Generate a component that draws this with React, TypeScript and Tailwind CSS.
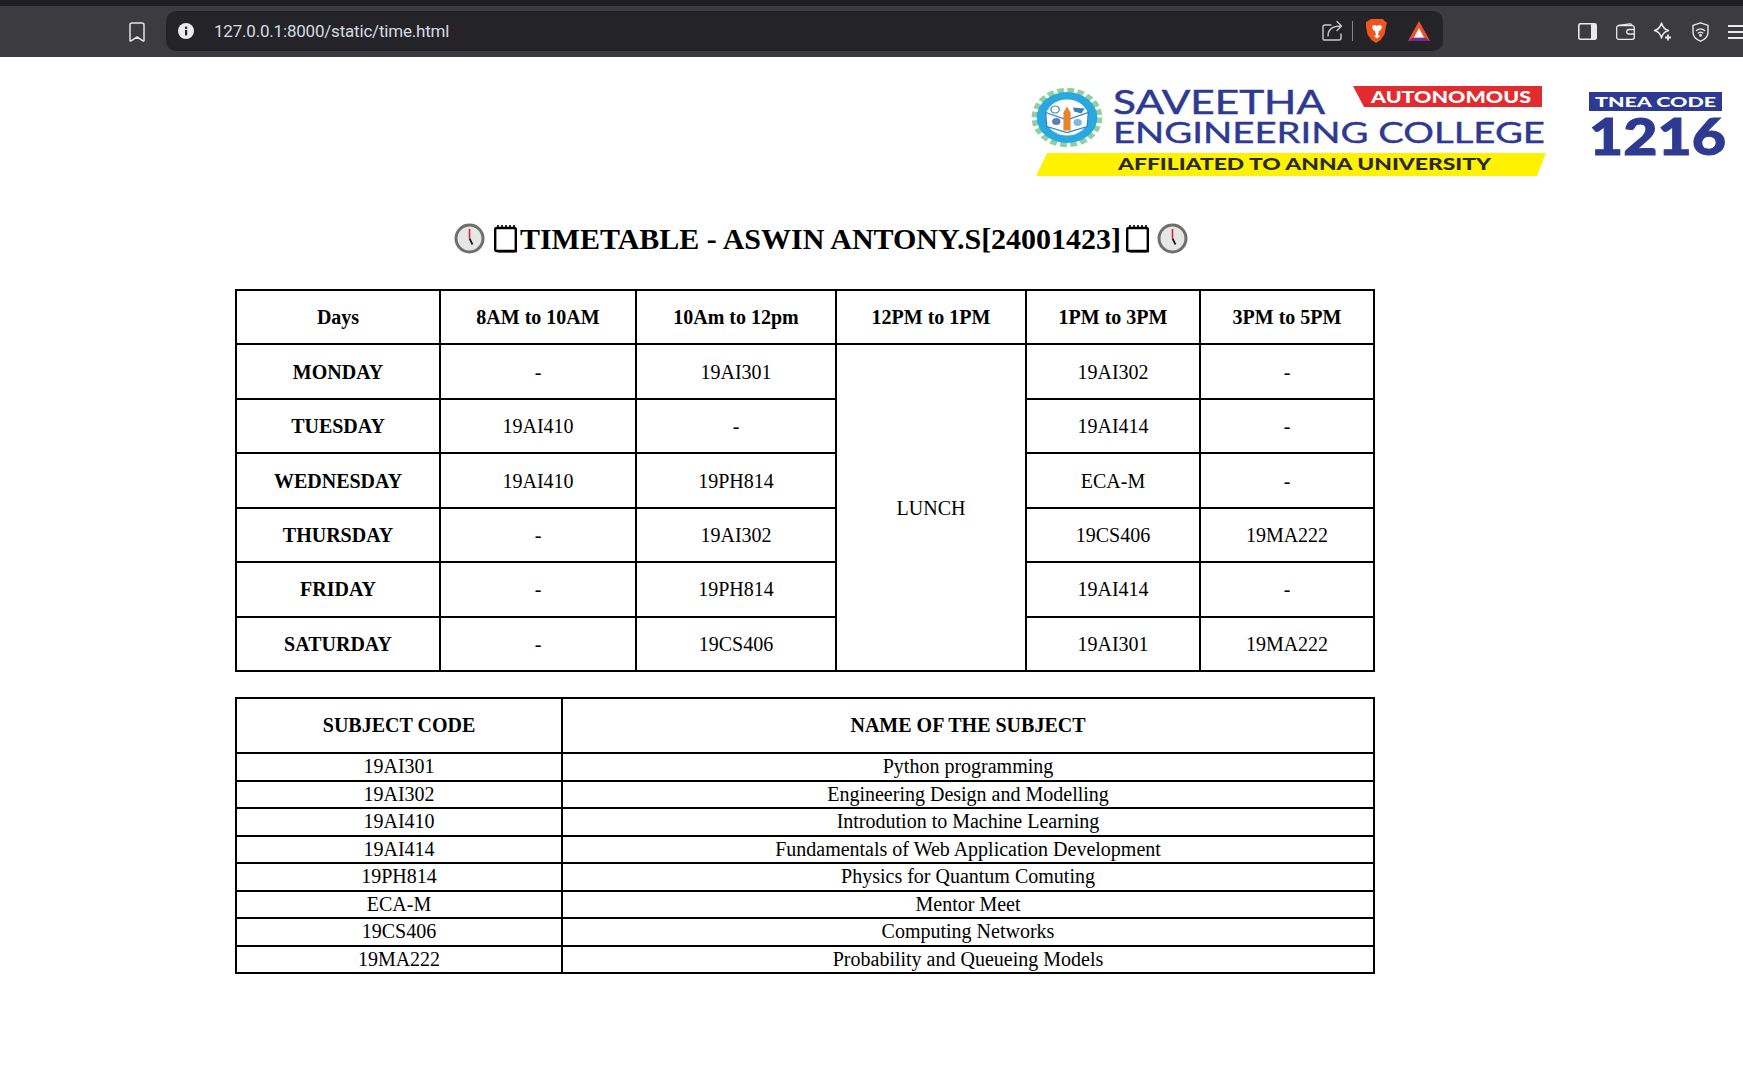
import React from 'react';

const days = [
    { day: 'MONDAY', a: '-', b: '19AI301', c: '19AI302', d: '-' },
    { day: 'TUESDAY', a: '19AI410', b: '-', c: '19AI414', d: '-' },
    { day: 'WEDNESDAY', a: '19AI410', b: '19PH814', c: 'ECA-M', d: '-' },
    { day: 'THURSDAY', a: '-', b: '19AI302', c: '19CS406', d: '19MA222' },
    { day: 'FRIDAY', a: '-', b: '19PH814', c: '19AI414', d: '-' },
    { day: 'SATURDAY', a: '-', b: '19CS406', c: '19AI301', d: '19MA222' },
];

const subjects = [
    ['19AI301', 'Python programming'],
    ['19AI302', 'Engineering Design and Modelling'],
    ['19AI410', 'Introdution to Machine Learning'],
    ['19AI414', 'Fundamentals of Web Application Development'],
    ['19PH814', 'Physics for Quantum Comuting'],
    ['ECA-M', 'Mentor Meet'],
    ['19CS406', 'Computing Networks'],
    ['19MA222', 'Probability and Queueing Models'],
];

const cell = 'border-2 border-black p-0 text-center align-middle';

const ClockEmoji = () => (
    <svg width="31" height="31" viewBox="0 0 31 31" className="shrink-0">
        <circle cx="15.5" cy="15.5" r="13.5" fill="#e6e6e6" stroke="#6e6e6e" strokeWidth="3" />
        <path d="M15.5 6v9.5" stroke="#d8204f" strokeWidth="1.6" />
        <path d="M15.5 15.5l3 6" stroke="#222" strokeWidth="1.8" />
    </svg>
);

const NotebookEmoji = () => (
    <svg width="26" height="30" viewBox="0 0 26 30" className="shrink-0">
        <rect x="2.2" y="5" width="20.6" height="23" rx="1.5" fill="#fff" stroke="#000" strokeWidth="2.4" />
        <path d="M23.5 9v20H5" fill="none" stroke="#000" strokeWidth="1" />
        <path d="M5 2v4M9 2v4M13 2v4M17 2v4M21 2v4" stroke="#000" strokeWidth="1.6" />
    </svg>
);

const BrowserBar = () => (
    <div className="h-[57px] bg-[#3b3b40] border-t-[6px] border-[#1f1e24] flex items-start text-[#e3e3e6]">
        <div className="w-[166px] h-[51px] flex items-center pl-[129px] shrink-0">
            <svg width="16" height="20" viewBox="0 0 16 20" fill="none" stroke="currentColor" strokeWidth="1.5" strokeLinejoin="round">
                <path d="M1 3a2 2 0 0 1 2-2h10a2 2 0 0 1 2 2v15.500c0 .5-.5.7-1 .4L8 15l-6 3.900c-.5.3-1 .1-1-.4z" />
            </svg>
        </div>
        <div className="w-[1277px] h-[40px] mt-[5px] bg-[#232328] rounded-[10px] flex items-center shrink-0">
            <svg width="18" height="18" viewBox="0 0 18 18" className="ml-[11px] shrink-0">
                <circle cx="9" cy="9" r="8" fill="#ececee" />
                <rect x="8" y="8" width="2.2" height="5.4" fill="#232328" />
                <rect x="8" y="4.6" width="2.2" height="2.2" fill="#232328" />
            </svg>
            <span className="ml-[19px] pt-px font-['Roboto',sans-serif] text-[17px] text-[#d6dbe2] tracking-[-0.2px]">127.0.0.1:8000/static/time.html</span>
            <div className="ml-auto flex items-center">
                <svg width="24" height="24" viewBox="0 0 24 24" fill="none" stroke="#c9c9cd" strokeWidth="1.4">
                    <path d="M11 6H5a2 2 0 0 0-2 2v12a1 1 0 0 0 1 1h15a2 2 0 0 0 2-2v-4" strokeLinecap="round" />
                    <path d="M8 17c0-6 4-10 13-10M17 2.5 21.5 7 17 11.5" strokeLinecap="round" strokeLinejoin="round" />
                </svg>
                <div className="ml-[8px] w-[1px] h-[20px] bg-[#85858a]" />
                <svg width="22" height="26" viewBox="0 0 22 26" className="ml-[13px]">
                    <path d="M5 1h12l2 2.500 2 1-1 4-1.500 8-4 5.500-4.500 3-4.500-3-4-5.500-1.500-8-1-4 2-1z" fill="#f1551f" />
                    <path d="M6 8l3-1 2 1 2-1 3 1-1 4-2 1-1 4 2 1-3 2.500L8 18l2-1-1-4-2-1z" fill="#fff" />
                </svg>
                <svg width="24" height="24" viewBox="0 0 24 24" className="ml-[19px] mr-[12px]">
                    <path d="M12 2 1 22h22z" fill="#f0502e" />
                    <path d="M1 22l4-3h14l4 3z" fill="#6d2f92" />
                    <path d="M12 9l-5 9.500h10z" fill="#fff" />
                </svg>
            </div>
        </div>
        <div className="flex items-center h-[51px] ml-[135px] shrink-0 text-[#e9e9ec]">
            <svg width="19" height="17" viewBox="0 0 19 17" fill="none">
                <rect x=".8" y=".8" width="17.400" height="15.400" rx="1.500" stroke="currentColor" strokeWidth="1.6" />
                <rect x="13" y="1" width="5" height="15" fill="currentColor" />
            </svg>
            <svg width="19" height="17" viewBox="0 0 19 17" fill="none" stroke="currentColor" strokeWidth="1.3" className="ml-[19px]">
                <path d="M2 2.500 14 .8c1.200 0 2 .7 2 2" />
                <rect x=".7" y="2.700" width="17.600" height="13.600" rx="2" />
                <path d="M18.300 6.500H13a2 2 0 0 0 0 4.500h5.300" />
            </svg>
            <svg width="19" height="19" viewBox="0 0 19 19" fill="none" stroke="currentColor" strokeWidth="1.5" className="ml-[18px]">
                <path d="M8.500 1c1 4 3 6.500 7 7.500-4 1-6 3.500-7 7.500-1-4-3-6.500-7-7.500 4-1 6-3.500 7-7.500z" strokeLinejoin="round" />
                <path d="M15 12.500v6M12 15.500h6" strokeWidth="1.800" />
            </svg>
            <svg width="17" height="20" viewBox="0 0 17 20" fill="none" stroke="currentColor" strokeWidth="1.400" className="ml-[20px]">
                <path d="M8.500 .8 16 3.300v7c0 4.500-3.500 7.400-7.500 8.900C4.500 17.700 1 14.800 1 10.300v-7z" strokeLinejoin="round" />
                <path d="M4.500 8.500c2.300-2 5.700-2 8 0M6.300 11c1.300-1 3.100-1 4.400 0" strokeLinecap="round" />
                <circle cx="8.500" cy="13.300" r=".8" fill="currentColor" />
            </svg>
            <div className="flex flex-col gap-[4px] w-[16px] ml-[19px]">
                <div className="h-[2px] bg-[#e9e9ec]" />
                <div className="h-[2px] bg-[#e9e9ec]" />
                <div className="h-[2px] bg-[#e9e9ec]" />
            </div>
        </div>
    </div>
);

const CollegeLogo = () => (
    <svg width="733" height="120" viewBox="1010 70 733 120" className="shrink-0">
        <g transform="translate(1067 117.500) scale(1.190 1)">
            <circle r="26.500" fill="none" stroke="#8fd0a0" strokeWidth="6.500" strokeDasharray="5.500 2.830" />
            <circle r="25.500" fill="#29a9e0" />
            <circle r="18" fill="#fff" />
            <path d="M-18-5-1 2 0 4 1 2 18-5 17 9 0 15-17 9z" fill="#fff" stroke="#2e86c5" strokeWidth="1.200" />
            <path d="M0-11l3 6v18h-6v-18z" fill="#e8842c" />
            <circle cx="-10" cy="-8" r="3.500" fill="none" stroke="#4a8ec9" strokeWidth="1.200" />
            <path d="M5-10l10 1-3 5-6-2z" fill="#3d7fb8" />
            <circle cx="-9" cy="4" r="3.500" fill="#5a7fb5" />
            <circle cx="9" cy="5" r="3.500" fill="#7fb9dd" />
        </g>
        <text x="1113" y="114" textLength="212" lengthAdjust="spacingAndGlyphs" fontFamily="Lato, sans-serif" fontSize="33" fill="#2e3a92" stroke="#2e3a92" strokeWidth=".5">SAVEETHA</text>
        <text x="1113" y="143" textLength="432" lengthAdjust="spacingAndGlyphs" fontFamily="Lato, sans-serif" fontSize="28.500" fill="#2e3a92" stroke="#2e3a92" strokeWidth=".4">ENGINEERING COLLEGE</text>
        <path d="M1353 86h189v21h-178z" fill="#e22b2f" />
        <text x="1371" y="103" textLength="160" lengthAdjust="spacingAndGlyphs" fontFamily="Lato, sans-serif" fontWeight="900" fontSize="16.500" fill="#fff">AUTONOMOUS</text>
        <path d="M1047 153h499l-9 23h-501z" fill="#fff200" />
        <text x="1118" y="170" textLength="373" lengthAdjust="spacingAndGlyphs" fontFamily="Lato, sans-serif" fontWeight="900" fontSize="16.500" fill="#2a2a2a">AFFILIATED TO ANNA UNIVERSITY</text>
        <rect x="1589" y="92" width="133" height="19" fill="#2e3a92" />
        <text x="1595" y="107" textLength="121" lengthAdjust="spacingAndGlyphs" fontFamily="Lato, sans-serif" fontWeight="900" fontSize="14" fill="#fff">TNEA CODE</text>
        <text x="1589" y="155" textLength="137" lengthAdjust="spacingAndGlyphs" fontFamily="Lato, sans-serif" fontWeight="900" fontSize="51" fill="#2e3a92" stroke="#2e3a92" strokeWidth="1">1216</text>
    </svg>
);

const TimeTable = () => (
    <table className="table-fixed border-collapse w-[1138px] text-[20px] text-black">
        <colgroup>
            <col className="w-[204px]" />
            <col className="w-[196px]" />
            <col className="w-[200px]" />
            <col className="w-[190px]" />
            <col className="w-[174px]" />
            <col className="w-[174px]" />
        </colgroup>
        <thead>
            <tr className="h-[54.450px]">
                {['Days', '8AM to 10AM', '10Am to 12pm', '12PM to 1PM', '1PM to 3PM', '3PM to 5PM'].map((heading) => (
                    <th key={heading} className={`${cell} font-bold`}>{heading}</th>
                ))}
            </tr>
        </thead>
        <tbody>
            {days.map((row, index) => (
                <tr key={row.day} className="h-[54.450px]">
                    <td className={`${cell} font-bold`}>{row.day}</td>
                    <td className={cell}>{row.a}</td>
                    <td className={cell}>{row.b}</td>
                    {index === 0 && <td rowSpan={6} className={cell}>LUNCH</td>}
                    <td className={cell}>{row.c}</td>
                    <td className={cell}>{row.d}</td>
                </tr>
            ))}
        </tbody>
    </table>
);

const SubjectTable = () => (
    <table className="table-fixed border-collapse w-[1138px] mt-[25px] text-[20px] leading-[23px] text-black">
        <colgroup>
            <col className="w-[326px]" />
            <col className="w-[812px]" />
        </colgroup>
        <thead>
            <tr className="h-[55px]">
                <th className={`${cell} font-bold`}>SUBJECT CODE</th>
                <th className={`${cell} font-bold`}>NAME OF THE SUBJECT</th>
            </tr>
        </thead>
        <tbody>
            {subjects.map(([code, name]) => (
                <tr key={code} className="h-[27.500px]">
                    <td className={cell}>{code}</td>
                    <td className={cell}>{name}</td>
                </tr>
            ))}
        </tbody>
    </table>
);

const App = () => {
    return (
        <div className="min-h-[1083px] bg-white font-['Liberation_Serif',serif] overflow-hidden">
            <BrowserBar />
            <div className="flex justify-end mt-[13px]">
                <CollegeLogo />
            </div>
            <div className="pl-[235px] pb-[100px]">
                <h1 className="w-[1138px] pl-[34px] mt-[28px] mb-[31px] h-[40px] flex items-center justify-center text-[30px] font-bold text-black whitespace-nowrap">
                    <ClockEmoji />
                    <span className="ml-[8px]"><NotebookEmoji /></span>
                    <span className="ml-[1px]">TIMETABLE - ASWIN ANTONY.S[24001423]</span>
                    <span className="ml-[4px]"><NotebookEmoji /></span>
                    <span className="ml-[6px]"><ClockEmoji /></span>
                </h1>
                <TimeTable />
                <SubjectTable />
            </div>
        </div>
    );
};

export default App;
